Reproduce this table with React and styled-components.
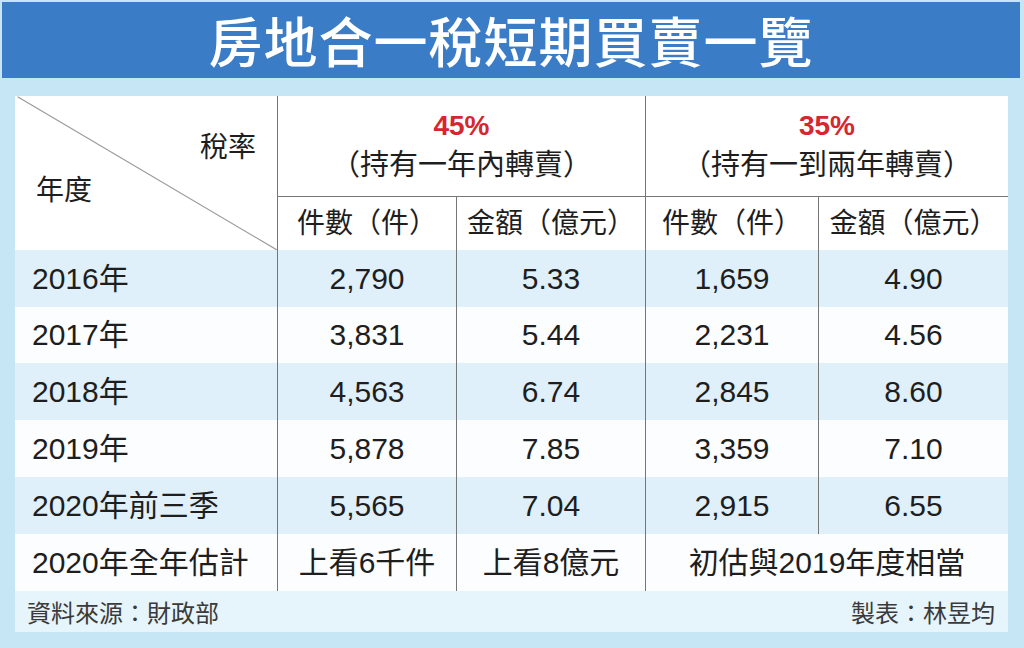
import React from "react";
import styled, { createGlobalStyle } from "styled-components";

const GlobalStyle = createGlobalStyle`
  html, body {
    margin: 0;
    padding: 0;
    background: #c7e6f5;
  }
  * {
    box-sizing: border-box;
  }
`;

const COLS = "262px 179px 189px 173px 190px";
const LINE = "#767676";

const Page = styled.div`
  width: 1024px;
  height: 648px;
  padding: 2px 4px 0 2px;
  background: #c7e6f5;
  display: flex;
  flex-direction: column;
  font-family: "Liberation Sans", "Noto Sans CJK TC", sans-serif;
  color: #1e1e1e;
`;

const TitleBar = styled.div`
  height: 76px;
  background: #3b7cc7;
  display: flex;
  align-items: center;
  justify-content: center;
  color: #ffffff;
  font-family: "Noto Sans CJK TC", sans-serif;
  font-weight: 500;
  font-size: 54px;
  letter-spacing: 1px;
  line-height: 1;
`;

const TableArea = styled.div`
  margin: 18px 0 0 13px;
  width: 993px;
`;

const Header = styled.div`
  display: grid;
  grid-template-columns: ${COLS};
  grid-template-rows: 100px 54px;
  background: #ffffff;
`;

const Corner = styled.div`
  position: relative;
  grid-row: 1 / 3;
  grid-column: 1;
  display: flex;
  flex-direction: column;
  font-size: 28px;
  line-height: 32px;
  padding-top: 36px;
`;

const Diagonal = styled.svg`
  position: absolute;
  inset: 0;
  width: 100%;
  height: 100%;
`;

const CornerTop = styled.span`
  align-self: flex-end;
  padding-right: 21px;
`;

const CornerBottom = styled.span`
  margin-top: 11px;
  padding-left: 21px;
`;

const Group = styled.div`
  grid-row: 1;
  grid-column: ${(p) => p.$span};
  border-left: 1px solid ${LINE};
  display: flex;
  flex-direction: column;
  align-items: center;
  justify-content: center;
  gap: 4px;
`;

const Rate = styled.span`
  color: #d6262f;
  font-weight: 700;
  font-size: 28px;
  line-height: 34px;
`;

const Note = styled.span`
  font-size: 29px;
  line-height: 36px;
`;

const SubHead = styled.div`
  grid-row: 2;
  border-left: 1px solid ${LINE};
  border-top: 1px solid ${LINE};
  display: flex;
  align-items: center;
  justify-content: center;
  font-size: 28px;
  line-height: 32px;
  white-space: nowrap;
`;

const Row = styled.div`
  display: grid;
  grid-template-columns: ${COLS};
  height: ${(p) => p.$h}px;
  background: ${(p) => (p.$shade ? "#dff0fa" : "#fbfdfe")};
`;

const YearCell = styled.div`
  display: flex;
  align-items: center;
  padding-left: 17px;
  font-size: 30px;
  line-height: 34px;
  white-space: nowrap;
`;

const Cell = styled.div`
  grid-column: ${(p) => p.$span || "auto"};
  border-left: 1px solid ${LINE};
  display: flex;
  align-items: center;
  justify-content: center;
  font-size: 30px;
  line-height: 34px;
  white-space: nowrap;
`;

const Footer = styled.div`
  height: 41px;
  background: #e6f4fb;
  display: flex;
  align-items: center;
  justify-content: space-between;
  padding: 0 13px 0 12px;
  font-size: 24px;
  color: #3a3a3a;
`;

const rows = [
  { year: "2016年", v: ["2,790", "5.33", "1,659", "4.90"] },
  { year: "2017年", v: ["3,831", "5.44", "2,231", "4.56"] },
  { year: "2018年", v: ["4,563", "6.74", "2,845", "8.60"] },
  { year: "2019年", v: ["5,878", "7.85", "3,359", "7.10"] },
  { year: "2020年前三季", v: ["5,565", "7.04", "2,915", "6.55"] },
];

const heights = [57, 56, 57, 57, 57, 57];

export default function App() {
  return (
    <>
      <GlobalStyle />
      <Page>
        <TitleBar>房地合一稅短期買賣一覽</TitleBar>
        <TableArea>
          <Header>
            <Corner>
              <Diagonal viewBox="0 0 100 100" preserveAspectRatio="none">
                <line
                  x1="1"
                  y1="0.5"
                  x2="100"
                  y2="100"
                  stroke="#9a9a9a"
                  strokeWidth="1.2"
                  vectorEffect="non-scaling-stroke"
                />
              </Diagonal>
              <CornerTop>稅率</CornerTop>
              <CornerBottom>年度</CornerBottom>
            </Corner>
            <Group $span="2 / 4">
              <Rate>45%</Rate>
              <Note>（持有一年內轉賣）</Note>
            </Group>
            <Group $span="4 / 6">
              <Rate>35%</Rate>
              <Note>（持有一到兩年轉賣）</Note>
            </Group>
            <SubHead>件數（件）</SubHead>
            <SubHead>金額（億元）</SubHead>
            <SubHead>件數（件）</SubHead>
            <SubHead>金額（億元）</SubHead>
          </Header>

          {rows.map((r, i) => (
            <Row key={r.year} $h={heights[i]} $shade={i % 2 === 0}>
              <YearCell>{r.year}</YearCell>
              {r.v.map((val, j) => (
                <Cell key={j}>{val}</Cell>
              ))}
            </Row>
          ))}
          <Row $h={heights[5]}>
            <YearCell>2020年全年估計</YearCell>
            <Cell>上看6千件</Cell>
            <Cell>上看8億元</Cell>
            <Cell $span="4 / 6">初估與2019年度相當</Cell>
          </Row>

          <Footer>
            <span>資料來源：財政部</span>
            <span>製表：林昱均</span>
          </Footer>
        </TableArea>
      </Page>
    </>
  );
}
